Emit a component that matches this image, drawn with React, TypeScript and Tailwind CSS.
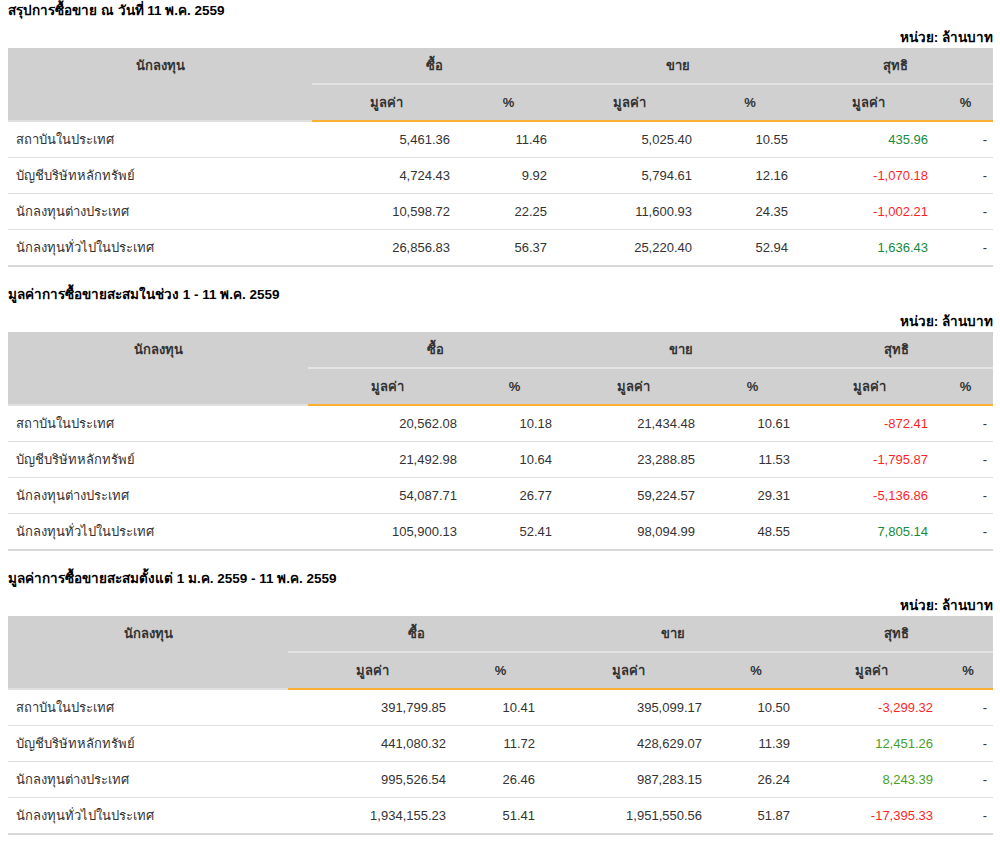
import React from 'react'

type Tone = 'red' | 'green' | 'lime'

interface Row {
  name: string
  buy: string
  buyPct: string
  sell: string
  sellPct: string
  net: string
  tone: Tone
}

interface Section {
  title: string
  cols: string[]
  rows: Row[]
}

const toneClass: Record<Tone, string> = {
  red: 'text-[#ff1f1f]',
  green: 'text-[#178a3c]',
  lime: 'text-[#47a02a]',
}

const investors = [
  'สถาบันในประเทศ',
  'บัญชีบริษัทหลักทรัพย์',
  'นักลงทุนต่างประเทศ',
  'นักลงทุนทั่วไปในประเทศ',
]

const sections: Section[] = [
  {
    title: 'สรุปการซื้อขาย ณ วันที่ 11 พ.ค. 2559',
    cols: ['w-[304px]', 'w-[148px]', 'w-[97px]', 'w-[145px]', 'w-[96px]', 'w-[140px]', 'w-[55px]'],
    rows: [
      { name: investors[0], buy: '5,461.36', buyPct: '11.46', sell: '5,025.40', sellPct: '10.55', net: '435.96', tone: 'green' },
      { name: investors[1], buy: '4,724.43', buyPct: '9.92', sell: '5,794.61', sellPct: '12.16', net: '-1,070.18', tone: 'red' },
      { name: investors[2], buy: '10,598.72', buyPct: '22.25', sell: '11,600.93', sellPct: '24.35', net: '-1,002.21', tone: 'red' },
      { name: investors[3], buy: '26,856.83', buyPct: '56.37', sell: '25,220.40', sellPct: '52.94', net: '1,636.43', tone: 'green' },
    ],
  },
  {
    title: 'มูลค่าการซื้อขายสะสมในช่วง 1 - 11 พ.ค. 2559',
    cols: ['w-[300px]', 'w-[159px]', 'w-[95px]', 'w-[143px]', 'w-[95px]', 'w-[138px]', 'w-[55px]'],
    rows: [
      { name: investors[0], buy: '20,562.08', buyPct: '10.18', sell: '21,434.48', sellPct: '10.61', net: '-872.41', tone: 'red' },
      { name: investors[1], buy: '21,492.98', buyPct: '10.64', sell: '23,288.85', sellPct: '11.53', net: '-1,795.87', tone: 'red' },
      { name: investors[2], buy: '54,087.71', buyPct: '26.77', sell: '59,224.57', sellPct: '29.31', net: '-5,136.86', tone: 'red' },
      { name: investors[3], buy: '105,900.13', buyPct: '52.41', sell: '98,094.99', sellPct: '48.55', net: '7,805.14', tone: 'green' },
    ],
  },
  {
    title: 'มูลค่าการซื้อขายสะสมตั้งแต่ 1 ม.ค. 2559 - 11 พ.ค. 2559',
    cols: ['w-[280px]', 'w-[168px]', 'w-[89px]', 'w-[167px]', 'w-[88px]', 'w-[143px]', 'w-[50px]'],
    rows: [
      { name: investors[0], buy: '391,799.85', buyPct: '10.41', sell: '395,099.17', sellPct: '10.50', net: '-3,299.32', tone: 'red' },
      { name: investors[1], buy: '441,080.32', buyPct: '11.72', sell: '428,629.07', sellPct: '11.39', net: '12,451.26', tone: 'lime' },
      { name: investors[2], buy: '995,526.54', buyPct: '26.46', sell: '987,283.15', sellPct: '26.24', net: '8,243.39', tone: 'lime' },
      { name: investors[3], buy: '1,934,155.23', buyPct: '51.41', sell: '1,951,550.56', sellPct: '51.87', net: '-17,395.33', tone: 'red' },
    ],
  },
]

function SummaryTable({ section, first }: { section: Section; first: boolean }) {
  const groupTh = 'bg-[#d0d0d0] border-b-2 border-[#e4e4e4] py-2 leading-[19px] font-bold text-center'
  const subTh = 'bg-[#d0d0d0] border-b-2 border-[#fbb034] py-2 leading-[19px] font-bold text-center'

  return (
    <section>
      <h2 className={`${first ? 'mt-[2px]' : 'mt-[19px]'} text-[13.5px] leading-[18px] font-bold text-black`}>
        {section.title}
      </h2>
      <div className="mt-[9px] text-right text-[13.5px] leading-[18px] font-bold text-black">หน่วย: ล้านบาท</div>
      <table className="mt-px w-[985px] table-fixed border-separate border-spacing-0 text-[13px] text-[#333]">
        <colgroup>
          {section.cols.map((c, i) => (
            <col key={i} className={c} />
          ))}
        </colgroup>
        <thead>
          <tr>
            <th rowSpan={2} className="bg-[#d0d0d0] border-b-2 border-[#e0e0e0] pt-2 align-top leading-[19px] font-bold text-center">
              นักลงทุน
            </th>
            <th colSpan={2} className={groupTh}>ซื้อ</th>
            <th colSpan={2} className={groupTh}>ขาย</th>
            <th colSpan={2} className={groupTh}>สุทธิ</th>
          </tr>
          <tr>
            <th className={subTh}>มูลค่า</th>
            <th className={subTh}>%</th>
            <th className={subTh}>มูลค่า</th>
            <th className={subTh}>%</th>
            <th className={subTh}>มูลค่า</th>
            <th className={subTh}>%</th>
          </tr>
        </thead>
        <tbody>
          {section.rows.map((r, i) => {
            const last = i === section.rows.length - 1
            const cell = `py-2 leading-[19px] ${last ? 'border-b-2 border-[#d9d9d9]' : 'border-b border-[#dddddd]'}`
            return (
              <tr key={r.name}>
                <td className={`${cell} pl-2 text-left`}>{r.name}</td>
                <td className={`${cell} pr-[10px] text-right`}>{r.buy}</td>
                <td className={`${cell} pr-[10px] text-right`}>{r.buyPct}</td>
                <td className={`${cell} pr-[10px] text-right`}>{r.sell}</td>
                <td className={`${cell} pr-[10px] text-right`}>{r.sellPct}</td>
                <td className={`${cell} pr-[10px] text-right ${toneClass[r.tone]}`}>{r.net}</td>
                <td className={`${cell} pr-[6px] text-right`}>-</td>
              </tr>
            )
          })}
        </tbody>
      </table>
    </section>
  )
}

export default function App() {
  return (
    <div className="w-[1000px] bg-white pl-2 pr-[7px] font-['Liberation_Sans',Arial,sans-serif]">
      {sections.map((s, i) => (
        <SummaryTable key={s.title} section={s} first={i === 0} />
      ))}
    </div>
  )
}
